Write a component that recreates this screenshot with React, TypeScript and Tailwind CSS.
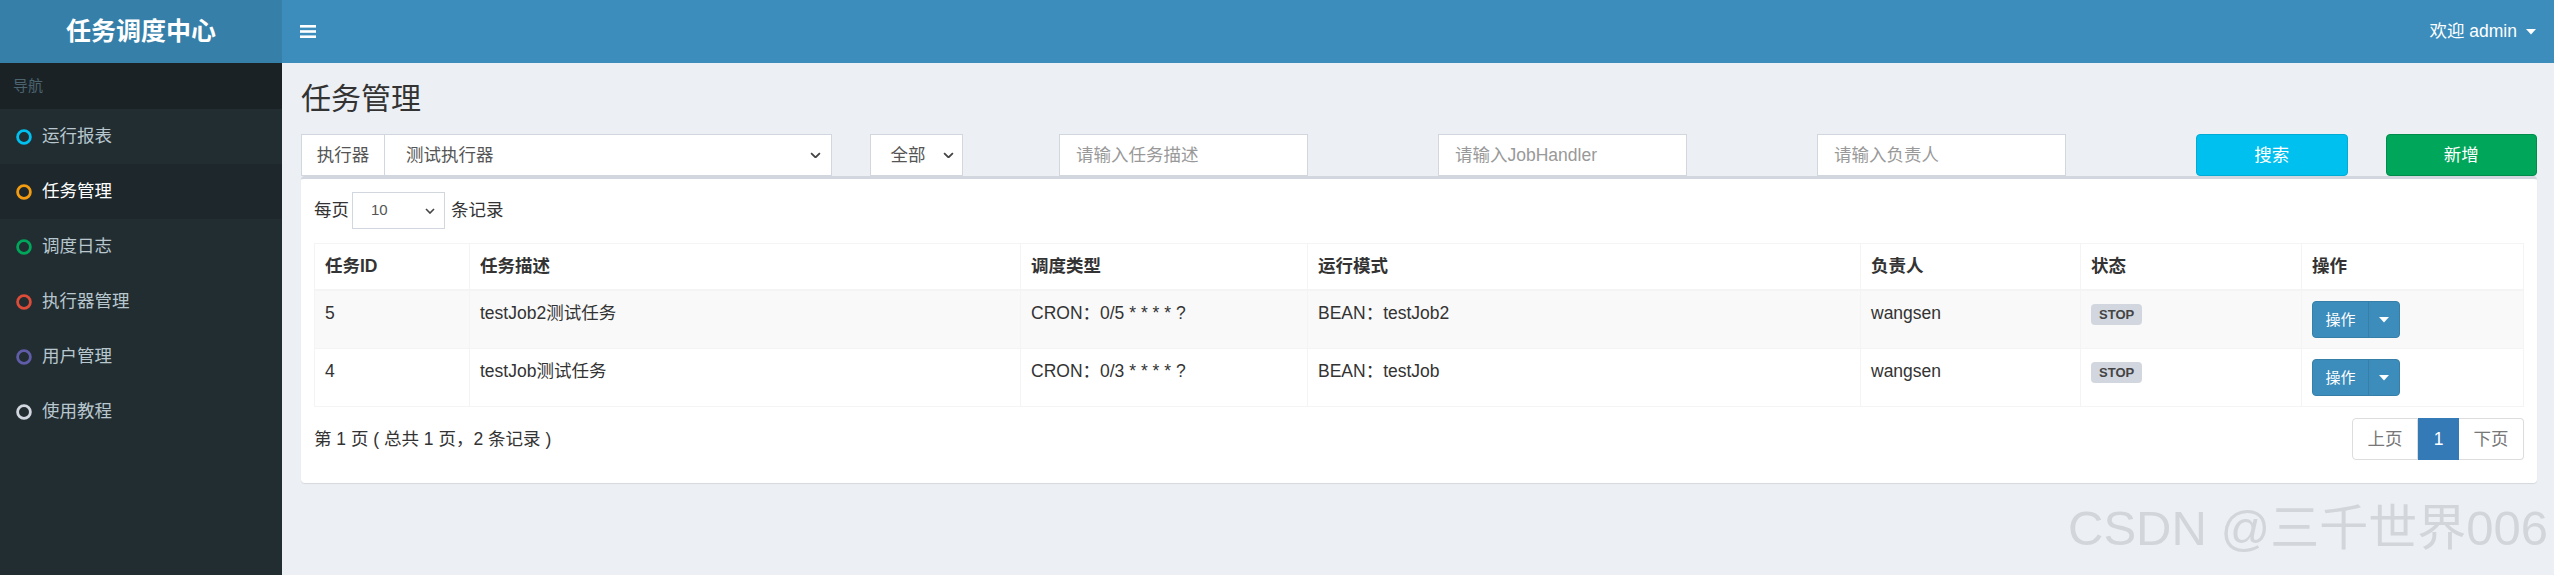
import React from 'react'

const navItems = [
  { label: '运行报表', color: 'text-[#00c0ef]' },
  { label: '任务管理', color: 'text-[#f39c12]', active: true },
  { label: '调度日志', color: 'text-[#00a65a]' },
  { label: '执行器管理', color: 'text-[#dd4b39]' },
  { label: '用户管理', color: 'text-[#605ca8]' },
  { label: '使用教程', color: 'text-[#d2d6de]' },
]

const jobs = [
  { id: 5, desc: 'testJob2测试任务', cron: 'CRON：0/5 * * * * ?', mode: 'BEAN：testJob2', owner: 'wangsen' },
  { id: 4, desc: 'testJob测试任务', cron: 'CRON：0/3 * * * * ?', mode: 'BEAN：testJob', owner: 'wangsen' },
]

function Circle({ className }: { className: string }) {
  return (
    <svg width="16" height="16" viewBox="0 0 16 16" className={className}>
      <circle cx="8" cy="8" r="6.4" fill="none" stroke="currentColor" strokeWidth="2.8" />
    </svg>
  )
}

function Chevron({ size = 11 }: { size?: number }) {
  return (
    <svg width={size} height={size * 0.6} viewBox="0 0 10 6" className="text-[#444]">
      <path d="M1 1l4 4 4-4" fill="none" stroke="currentColor" strokeWidth="1.6" />
    </svg>
  )
}

function Caret() {
  return (
    <svg width="10" height="6" viewBox="0 0 10 6">
      <path d="M0 0h10L5 5.5z" fill="currentColor" />
    </svg>
  )
}

export default function App() {
  return (
    <div className="relative flex h-[575px] w-[2554px] overflow-hidden font-['Liberation_Sans','Noto_Sans_CJK_SC',sans-serif] text-[17.5px] text-[#333]">
      {/* sidebar */}
      <aside className="flex w-[282px] shrink-0 flex-col bg-[#222d32]">
        <div className="flex h-[63px] items-center justify-center bg-[#367fa9] text-[25px] font-bold text-white">
          任务调度中心
        </div>
        <div className="flex h-[46px] items-center bg-[#1a2226] pl-[13px] text-[15px] text-[#4b646f]">导航</div>
        {navItems.map(item => (
          <div
            key={item.label}
            className={`flex h-[55px] items-center gap-[10px] pl-[16px] ${
              item.active ? 'bg-[#1e282c] text-white' : 'text-[#b8c7ce]'
            }`}
          >
            <Circle className={item.color} />
            <span>{item.label}</span>
          </div>
        ))}
      </aside>

      {/* main */}
      <div className="flex flex-1 flex-col bg-[#ecf0f5]">
        <header className="flex h-[63px] shrink-0 items-center justify-between bg-[#3c8dbc] pl-[18px] pr-[20px] text-white">
          <svg width="16" height="13" viewBox="0 0 16 13">
            <rect x="0" y="0" width="16" height="2.6" fill="currentColor" />
            <rect x="0" y="5.2" width="16" height="2.6" fill="currentColor" />
            <rect x="0" y="10.4" width="16" height="2.6" fill="currentColor" />
          </svg>
          <div className="flex items-center gap-[9px]">
            <span>欢迎 admin</span>
            <Caret />
          </div>
        </header>

        <div className="px-[19px] pt-[19px]">
          <h1 className="text-[30px] leading-[33px] text-[#333]">任务管理</h1>

          {/* filter row */}
          <div className="mx-[-19px] mt-[19px] grid grid-cols-12">
            <div className="col-span-3 px-[19px]">
              <div className="flex h-[42px] border border-[#d2d6de] bg-white">
                <div className="flex w-[83px] items-center justify-center border-r border-[#d2d6de] text-[#555]">执行器</div>
                <div className="flex flex-1 items-center justify-between pl-[21px] pr-[10px] text-[#555]">
                  <span>测试执行器</span>
                  <Chevron />
                </div>
              </div>
            </div>
            <div className="col-span-1 px-[19px]">
              <div className="flex h-[42px] w-[93px] items-center justify-between border border-[#d2d6de] bg-white pl-[20px] pr-[8px] text-[#555]">
                <span>全部</span>
                <Chevron />
              </div>
            </div>
            <div className="col-span-2 px-[19px]">
              <div className="flex h-[42px] w-[249px] items-center border border-[#d2d6de] bg-white px-[16px] text-[#999]">请输入任务描述</div>
            </div>
            <div className="col-span-2 px-[19px]">
              <div className="flex h-[42px] w-[249px] items-center border border-[#d2d6de] bg-white px-[16px] text-[#999]">请输入JobHandler</div>
            </div>
            <div className="col-span-2 px-[19px]">
              <div className="flex h-[42px] w-[249px] items-center border border-[#d2d6de] bg-white px-[16px] text-[#999]">请输入负责人</div>
            </div>
            <div className="col-span-1 px-[19px]">
              <div className="flex h-[42px] items-center justify-center rounded-[4px] border border-[#00acd6] bg-[#00c0ef] text-white">搜索</div>
            </div>
            <div className="col-span-1 px-[19px]">
              <div className="flex h-[42px] items-center justify-center rounded-[4px] border border-[#008d4c] bg-[#00a65a] text-white">新增</div>
            </div>
          </div>

          {/* box */}
          <div className="rounded-[4px] border-t-[3px] border-[#d2d6de] bg-white px-[13px] pb-[23px] pt-[13px] shadow-[0_1px_1px_rgba(0,0,0,0.1)]">
            <div className="flex items-center">
              <span>每页</span>
              <div className="ml-[3px] flex h-[37px] w-[93px] items-center justify-between border border-[#d2d6de] pl-[18px] pr-[9px] text-[15px] text-[#555]">
                <span>10</span>
                <Chevron size={10} />
              </div>
              <span className="ml-[6px]">条记录</span>
            </div>

            <table className="mt-[14px] w-full table-fixed border-collapse border border-[#f4f4f4]">
              <colgroup>
                <col className="w-[155px]" />
                <col className="w-[551px]" />
                <col className="w-[287px]" />
                <col className="w-[553px]" />
                <col className="w-[220px]" />
                <col className="w-[221px]" />
                <col className="w-[222px]" />
              </colgroup>
              <thead>
                <tr>
                  {['任务ID', '任务描述', '调度类型', '运行模式', '负责人', '状态', '操作'].map(h => (
                    <th
                      key={h}
                      className="border border-b-2 border-[#f4f4f4] p-[10px] text-left align-bottom font-bold leading-[25px]"
                    >
                      {h}
                    </th>
                  ))}
                </tr>
              </thead>
              <tbody>
                {jobs.map((job, i) => (
                  <tr key={job.id} className={i % 2 === 0 ? 'bg-[#f9f9f9]' : 'bg-white'}>
                    <td className="border border-[#f4f4f4] p-[10px] align-top leading-[25px]">{job.id}</td>
                    <td className="border border-[#f4f4f4] p-[10px] align-top leading-[25px]">{job.desc}</td>
                    <td className="border border-[#f4f4f4] p-[10px] align-top leading-[25px]">{job.cron}</td>
                    <td className="border border-[#f4f4f4] p-[10px] align-top leading-[25px]">{job.mode}</td>
                    <td className="border border-[#f4f4f4] p-[10px] align-top leading-[25px]">{job.owner}</td>
                    <td className="border border-[#f4f4f4] p-[10px] align-top leading-[25px]">
                      <span className="inline-block rounded-[4px] bg-[#d2d6de] px-[8px] py-[3px] text-[13px] font-bold leading-[15px] text-[#444]">
                        STOP
                      </span>
                    </td>
                    <td className="border border-[#f4f4f4] p-[10px] align-top leading-[25px]">
                      <div className="inline-flex h-[37px] overflow-hidden rounded-[4px] border border-[#367fa9] bg-[#3c8dbc] text-[15px] text-white">
                        <span className="flex w-[55px] items-center justify-center">操作</span>
                        <span className="flex w-[31px] items-center justify-center border-l border-[#367fa9]">
                          <Caret />
                        </span>
                      </div>
                    </td>
                  </tr>
                ))}
              </tbody>
            </table>

            <div className="mt-[11px] flex items-center justify-between">
              <span>第 1 页 ( 总共 1 页，2 条记录 )</span>
              <div className="flex h-[42px]">
                <span className="flex w-[66px] items-center justify-center rounded-l-[4px] border border-[#ddd] bg-white text-[#777]">上页</span>
                <span className="flex w-[41px] items-center justify-center border border-[#337ab7] bg-[#337ab7] text-white">1</span>
                <span className="flex w-[65px] items-center justify-center rounded-r-[4px] border border-l-0 border-[#ddd] bg-white text-[#777]">下页</span>
              </div>
            </div>
          </div>
        </div>
      </div>

      {/* watermark */}
      <div className="pointer-events-none absolute right-[6px] top-[496px] text-[49px] leading-[64px] text-[#d2d5da]">
        CSDN @三千世界006
      </div>
    </div>
  )
}
